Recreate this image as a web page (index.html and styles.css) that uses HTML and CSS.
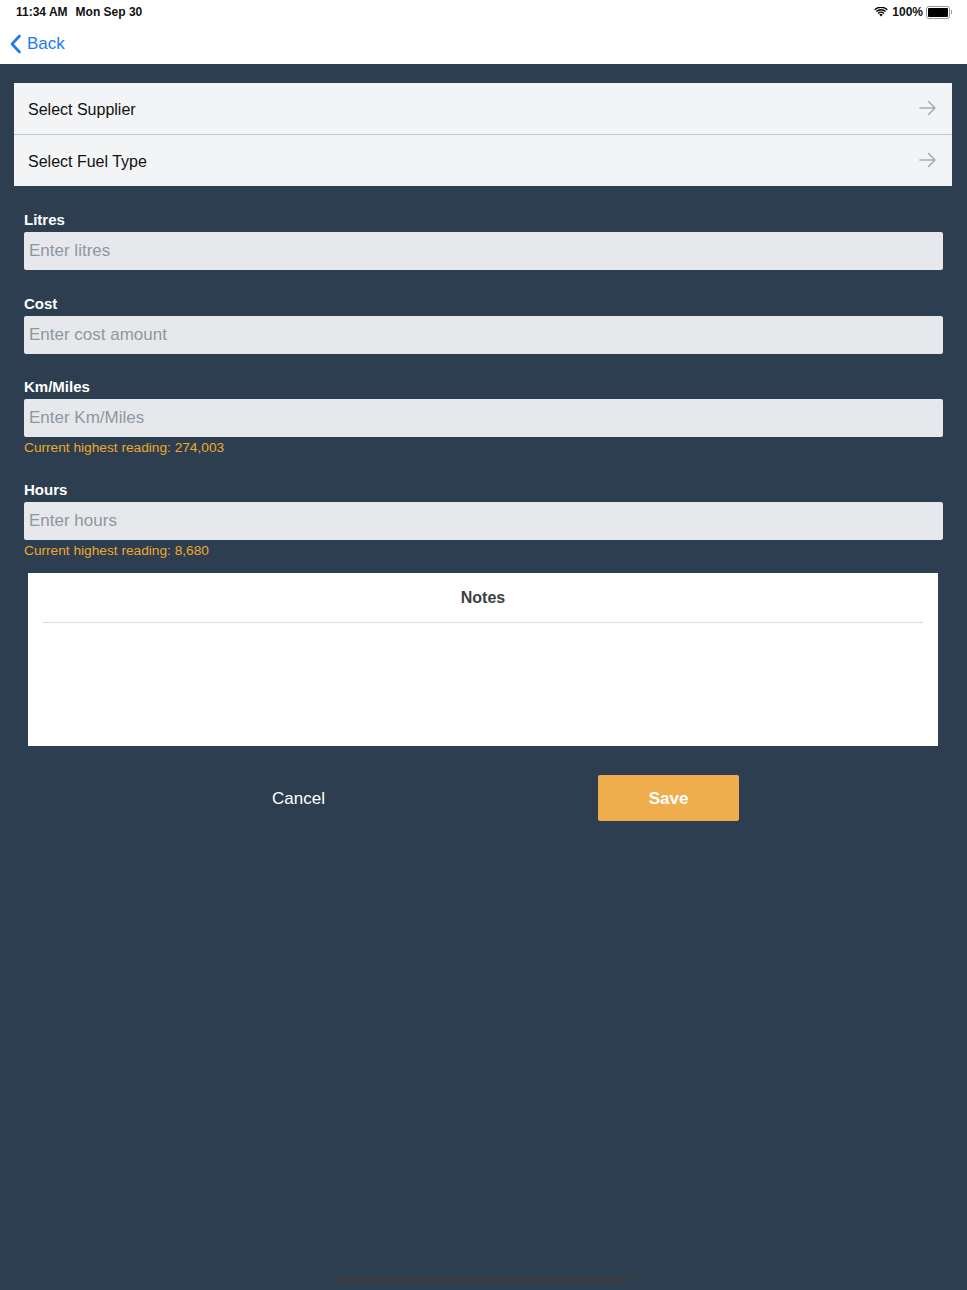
FILE: index.html
```html
<!DOCTYPE html>
<html lang="en">
<head>
    <meta charset="UTF-8">
    <meta name="viewport" content="width=device-width, initial-scale=1.0">
    <title>Add Fuel</title>
    <link rel="stylesheet" href="styles.css">
</head>
<body>
    <div class="header">
        <div class="status-bar">
            <span class="status-time">11:34 AM</span>
            <span class="status-date">Mon Sep 30</span>
            <span class="status-right">
                <svg class="wifi" width="14" height="10" viewBox="0 0 14 10">
                    <path d="M7 9.6 L5.2 7.6 A2.6 2.6 0 0 1 8.8 7.6 Z" fill="#000"/>
                    <path d="M3.6 5.9 A4.9 4.9 0 0 1 10.4 5.9 L9.5 6.9 A3.6 3.6 0 0 0 4.5 6.9 Z" fill="#000"/>
                    <path d="M1.9 4.1 A7.3 7.3 0 0 1 12.1 4.1 L11.2 5.1 A6 6 0 0 0 2.8 5.1 Z" fill="#000"/>
                    <path d="M0.2 2.3 A9.7 9.7 0 0 1 13.8 2.3 L12.9 3.3 A8.4 8.4 0 0 0 1.1 3.3 Z" fill="#000"/>
                </svg>
                <span class="battery-text">100%</span>
                <span class="battery"><span class="battery-fill"></span></span>
                <span class="battery-tip"></span>
            </span>
        </div>
        <div class="nav-bar">
            <a class="back-link" href="#">
                <svg width="13" height="20" viewBox="0 0 13 20">
                    <path d="M10.5 2 L3 10 L10.5 18" fill="none" stroke="#1a7cf0" stroke-width="2.6" stroke-linecap="round" stroke-linejoin="round"/>
                </svg>
                <span>Back</span>
            </a>
        </div>
    </div>

    <div class="content">
        <div class="select-list">
            <div class="select-row">
                <span>Select Supplier</span>
                <svg class="arrow" width="18" height="16" viewBox="0 0 18 16">
                    <path d="M1 8 H16 M9.5 1.5 L16 8 L9.5 14.5" fill="none" stroke="#a9acb1" stroke-width="1.6" stroke-linecap="round" stroke-linejoin="round"/>
                </svg>
            </div>
            <div class="select-row">
                <span>Select Fuel Type</span>
                <svg class="arrow" width="18" height="16" viewBox="0 0 18 16">
                    <path d="M1 8 H16 M9.5 1.5 L16 8 L9.5 14.5" fill="none" stroke="#a9acb1" stroke-width="1.6" stroke-linecap="round" stroke-linejoin="round"/>
                </svg>
            </div>
        </div>

        <div class="fields">
            <div class="field">
                <label class="field-label">Litres</label>
                <div class="field-input">Enter litres</div>
            </div>
            <div class="field">
                <label class="field-label">Cost</label>
                <div class="field-input">Enter cost amount</div>
            </div>
            <div class="field">
                <label class="field-label">Km/Miles</label>
                <div class="field-input">Enter Km/Miles</div>
                <div class="field-hint">Current highest reading: 274,003</div>
            </div>
            <div class="field">
                <label class="field-label">Hours</label>
                <div class="field-input">Enter hours</div>
                <div class="field-hint">Current highest reading: 8,680</div>
            </div>
        </div>

        <div class="notes">
            <div class="notes-title">Notes</div>
            <div class="notes-body"></div>
        </div>

        <div class="actions">
            <button class="button cancel">Cancel</button>
            <button class="button save">Save</button>
        </div>
    </div>

    <div class="home-indicator"></div>
</body>
</html>
```

FILE: styles.css
```css
html, body {
    height: 100%;
}

body {
    margin: 0;
    background-color: #2c3e50;
    font-family: "Liberation Sans", Arial, sans-serif;
    position: relative;
    overflow: hidden;
}

.header {
    background-color: #fff;
    height: 64px;
}

.status-bar {
    height: 24px;
    display: flex;
    align-items: center;
    padding: 0 15px 0 16px;
    font-size: 12px;
    font-weight: bold;
    color: #111;
}

.status-date {
    margin-left: 8px;
}

.status-right {
    margin-left: auto;
    display: flex;
    align-items: center;
}

.wifi {
    margin-right: 4px;
}

.battery-text {
    margin-right: 3px;
}

.battery {
    width: 20px;
    height: 9px;
    border: 1px solid #999;
    border-radius: 3px;
    padding: 1px;
    display: flex;
}

.battery-fill {
    flex: 1;
    background-color: #000;
    border-radius: 1px;
}

.battery-tip {
    width: 1px;
    height: 4px;
    background-color: #999;
    margin-left: 1px;
}

.nav-bar {
    height: 40px;
    display: flex;
    align-items: center;
    padding-left: 9px;
}

.back-link {
    display: flex;
    align-items: center;
    color: #1a7cf0;
    text-decoration: none;
    font-size: 17px;
}

.back-link svg {
    margin-right: 5px;
}

.content {
    padding-top: 19px;
}

.select-list {
    margin: 0 15px 0 14px;
    background-color: #f3f4f6;
}

.select-row {
    height: 51px;
    box-sizing: border-box;
    display: flex;
    align-items: center;
    justify-content: space-between;
    padding: 2px 15px 0 14px;
    font-size: 16px;
    color: #111;
}

.select-row + .select-row {
    border-top: 1px solid #c3c5c9;
    height: 52px;
}

.select-row .arrow {
    margin-top: -4px;
}

.fields {
    padding: 25px 24px 0 24px;
}

.field + .field {
    margin-top: 24.5px;
}

.field-label {
    display: block;
    color: #fff;
    font-size: 15px;
    font-weight: bold;
    line-height: 18px;
    margin-bottom: 3px;
}

.field-input {
    height: 38px;
    background-color: #e6e8eb;
    border-radius: 2px;
    box-sizing: border-box;
    padding-left: 5px;
    display: flex;
    align-items: center;
    font-size: 17px;
    color: #8f979f;
}

.field-hint {
    margin-top: 3px;
    font-size: 13.7px;
    line-height: 16px;
    color: #eea929;
}

.notes {
    margin: 14.5px 29px 0 28px;
    background-color: #fff;
    height: 173px;
}

.notes-title {
    margin: 0 15px;
    height: 50px;
    box-sizing: border-box;
    border-bottom: 1px solid #dcdcdc;
    display: flex;
    align-items: center;
    justify-content: center;
    font-size: 16px;
    font-weight: bold;
    color: #3d3f42;
    padding-top: 1px;
}

.actions {
    margin-top: 29px;
    display: flex;
    justify-content: center;
    gap: 229px;
}

.button {
    width: 141px;
    height: 46px;
    border: none;
    font-family: "Liberation Sans", Arial, sans-serif;
    font-size: 17px;
    color: #fff;
    background: none;
    cursor: pointer;
    border-radius: 2px;
}

.button.cancel {
    padding-top: 2px;
}

.button.save {
    background-color: #f0ad4e;
    font-weight: bold;
    padding-top: 2px;
}

.home-indicator {
    position: absolute;
    left: 336px;
    bottom: 8px;
    width: 295px;
    height: 5px;
    border-radius: 3px;
    background-color: #3b3c40;
}
```
